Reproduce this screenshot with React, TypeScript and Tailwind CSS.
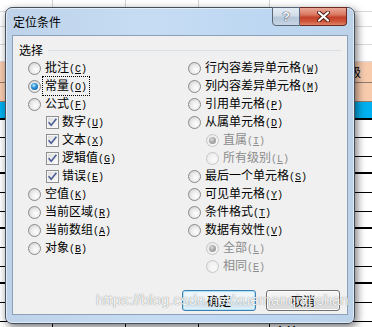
import clsx from 'clsx';

type Opt = {
  label: string;
  hot: string;
  kind: 'radio' | 'check';
  checked?: boolean;
  disabled?: boolean;
  indent?: boolean;
  focus?: boolean;
};

const leftOpts: Opt[] = [
  { label: '批注', hot: 'C', kind: 'radio' },
  { label: '常量', hot: 'O', kind: 'radio', checked: true, focus: true },
  { label: '公式', hot: 'F', kind: 'radio' },
  { label: '数字', hot: 'U', kind: 'check', checked: true, indent: true },
  { label: '文本', hot: 'X', kind: 'check', checked: true, indent: true },
  { label: '逻辑值', hot: 'G', kind: 'check', checked: true, indent: true },
  { label: '错误', hot: 'E', kind: 'check', checked: true, indent: true },
  { label: '空值', hot: 'K', kind: 'radio' },
  { label: '当前区域', hot: 'R', kind: 'radio' },
  { label: '当前数组', hot: 'A', kind: 'radio' },
  { label: '对象', hot: 'B', kind: 'radio' },
];

const rightOpts: Opt[] = [
  { label: '行内容差异单元格', hot: 'W', kind: 'radio' },
  { label: '列内容差异单元格', hot: 'M', kind: 'radio' },
  { label: '引用单元格', hot: 'P', kind: 'radio' },
  { label: '从属单元格', hot: 'D', kind: 'radio' },
  { label: '直属', hot: 'I', kind: 'radio', checked: true, disabled: true, indent: true },
  { label: '所有级别', hot: 'L', kind: 'radio', disabled: true, indent: true },
  { label: '最后一个单元格', hot: 'S', kind: 'radio' },
  { label: '可见单元格', hot: 'Y', kind: 'radio' },
  { label: '条件格式', hot: 'T', kind: 'radio' },
  { label: '数据有效性', hot: 'V', kind: 'radio' },
  { label: '全部', hot: 'L', kind: 'radio', checked: true, disabled: true, indent: true },
  { label: '相同', hot: 'E', kind: 'radio', disabled: true, indent: true },
];

// worksheet rows peeking out around the dialog
const sheetRows = [
  { row: 'h-[12px] border-b border-[#dadada]', line: 'border-[#d4d4d4]' },
  { row: 'h-[15px] border-b border-[#dadada]', line: 'border-[#d4d4d4]' },
  { row: 'h-[18px] border-b border-[#dadada]', line: 'border-[#d4d4d4]' },
  { row: 'h-[17px] border-b border-[#dadada]', line: 'border-[#d4d4d4]' },
  { row: 'h-[21px] border-b border-[#8f7b6c] bg-[#f8cbad]', line: 'border-[#8f7b6c]', text: '级' },
  { row: 'h-[19px] border-b border-[#8f7b6c] bg-[#f8cbad]', line: 'border-[#8f7b6c]' },
  { row: 'h-[18px] border-b-2 border-black bg-[#00b0f0]', line: 'border-black' },
  { row: 'h-[18px] border-b border-black', line: 'border-black' },
  { row: 'h-[19px] border-b border-black', line: 'border-black' },
  { row: 'h-[17px] border-b-2 border-black', line: 'border-black' },
  { row: 'h-[19px] border-b border-black', line: 'border-black' },
  { row: 'h-[19px] border-b border-black', line: 'border-black' },
  { row: 'h-[17px] border-b-2 border-black', line: 'border-black' },
  { row: 'h-[19px] border-b border-black', line: 'border-black' },
  { row: 'h-[19px] border-b border-black', line: 'border-black' },
  { row: 'h-[17px] border-b-2 border-black', line: 'border-black' },
  { row: 'h-[19px] border-b border-black', line: 'border-black' },
  { row: 'h-[19px] border-b border-black', line: 'border-black' },
  { row: 'h-[19px] border-b border-black', line: 'border-black', extra: '审核' },
];

function Sheet() {
  return (
    <div className="flex flex-col">
      {sheetRows.map((r, i) => (
        <div key={i} className={clsx('flex', r.row)}>
          <div className={clsx('w-[53px] border-r', r.line)} />
          <div className={clsx('w-[73px] border-r', r.line)} />
          <div className={clsx('w-[73px] border-r', r.line)} />
          <div className={clsx('w-[71px] border-r', r.line)} />
          <div className="flex flex-1 items-start">
            {r.text && <span className="ml-auto mr-[11px] leading-[20px]">{r.text}</span>}
            {r.extra && <span className="ml-[4px] mt-[2px] leading-[16px] font-bold">{r.extra}</span>}
          </div>
        </div>
      ))}
    </div>
  );
}

function Radio({ checked, disabled }: { checked?: boolean; disabled?: boolean }) {
  return (
    <span
      className={clsx(
        'flex h-[13px] w-[13px] shrink-0 items-center justify-center rounded-full border',
        disabled
          ? 'border-[#c6c6c6] bg-[radial-gradient(circle_at_62%_62%,#fbfbfb_0%,#f0f0f0_55%,#e3e3e3_100%)]'
          : 'border-[#8a8a8a] bg-[radial-gradient(circle_at_62%_62%,#ffffff_0%,#ececec_45%,#c8c8c8_100%)]'
      )}
    >
      {checked && (
        <span
          className={clsx(
            'h-[7px] w-[7px] rounded-full',
            disabled
              ? 'bg-[radial-gradient(circle_at_40%_35%,#dadada_0%,#ababab_45%,#8a8a8a_100%)]'
              : 'bg-[radial-gradient(circle_at_40%_35%,#c4ecff_0%,#2b93dc_40%,#0b4a86_100%)]'
          )}
        />
      )}
    </span>
  );
}

function Check() {
  return (
    <span className="flex h-[13px] w-[13px] shrink-0 items-center justify-center border border-[#8e8f8f] bg-[linear-gradient(135deg,#d9d9d9,#ffffff)] shadow-[inset_0_0_0_1px_#f6f6f6]">
      <svg width="11" height="11" viewBox="0 0 11 11">
        <path d="M1.6 5.2 L4.2 8.2 L9.4 1.8" fill="none" stroke="#4a5e95" strokeWidth="1.6" />
      </svg>
    </span>
  );
}

function Option({ o }: { o: Opt }) {
  return (
    <div className={clsx('flex h-[18px] items-center', o.indent && 'pl-[18px]')}>
      {o.kind === 'radio' ? <Radio checked={o.checked} disabled={o.disabled} /> : <Check />}
      <span
        className={clsx(
          'whitespace-nowrap px-[2px] leading-[15px]',
          o.kind === 'radio' ? 'ml-[2px]' : 'ml-px',
          o.disabled && 'text-[#8c8c8c]',
          o.focus && 'outline outline-1 outline-dotted outline-black'
        )}
      >
        {o.label}
        <span className="font-['Liberation_Mono',monospace] text-[10px]">
          (<span className="underline">{o.hot}</span>)
        </span>
      </span>
    </div>
  );
}

function Dialog() {
  return (
    <div className="absolute left-[5px] top-[7px] flex h-[317px] w-[350px] flex-col rounded-[7px] border border-[#454f5c] bg-[linear-gradient(90deg,#bed3ea_0%,#c6dcf3_40%,#bdd7f2_75%,#bcd2e9_100%)] shadow-[2px_3px_9px_rgba(0,0,0,0.55),inset_0_0_0_1px_rgba(255,255,255,0.55)]">
      <div className="flex h-[27px] items-start justify-between pl-[7px] pr-[7px]">
        <span className="mt-[5px] leading-[18px]">定位条件</span>
        <div className="-mt-px flex">
          <div className="flex h-[19px] w-[28px] items-center justify-center rounded-bl-[4px] border border-[#5a6778] bg-[linear-gradient(180deg,#e4ecf5_0%,#d2dde9_45%,#b7c6d8_55%,#c6d4e4_100%)] font-['Liberation_Sans',sans-serif] text-[13px] font-bold text-[#f5f7fa] [text-shadow:0_0_1px_#2c3646,0_0_1px_#2c3646]">
            ?
          </div>
          <div className="flex h-[19px] w-[47px] items-center justify-center rounded-br-[4px] border border-l-0 border-[#6b2a20] bg-[linear-gradient(180deg,#eaa999_0%,#d9765f_40%,#c4402a_55%,#cf573c_80%,#df8668_100%)]">
            <svg width="13" height="11" viewBox="0 0 13 11">
              <path d="M2 1.5 L11 9.5 M11 1.5 L2 9.5" stroke="#4d1b13" strokeWidth="4" strokeLinecap="round" />
              <path d="M2 1.5 L11 9.5 M11 1.5 L2 9.5" stroke="#ffffff" strokeWidth="2.2" strokeLinecap="round" />
            </svg>
          </div>
        </div>
      </div>
      <div className="mx-[6px] mb-[8px] flex flex-1 flex-col border border-[#8ca1b8] bg-[#f0f0f0]">
        <div className="mt-[5px] flex h-[18px] items-center px-[6px]">
          <span>选择</span>
          <span className="ml-[5px] h-px flex-1 bg-[#d5dfe5]" />
        </div>
        <div className="flex pl-[15px]">
          <div className="w-[160px]">
            {leftOpts.map((o) => (
              <Option key={o.label} o={o} />
            ))}
          </div>
          <div>
            {rightOpts.map((o) => (
              <Option key={o.label} o={o} />
            ))}
          </div>
        </div>
        <div className="mt-[15px] flex justify-end gap-[10px] pr-[7px]">
          <button className="h-[21px] w-[74px] rounded-[3px] border border-[#3c7fb1] bg-[linear-gradient(180deg,#f4f9fc_0%,#eaf3f8_50%,#dbe9f1_51%,#d3e4ee_100%)] shadow-[inset_0_0_0_1px_#b6e3f8,inset_0_0_2px_2px_#e2f4fc] leading-[19px]">
            确定
          </button>
          <button className="h-[21px] w-[74px] rounded-[3px] border border-[#707070] bg-[linear-gradient(180deg,#f6f6f6_0%,#eeeeee_50%,#e2e2e2_51%,#dadada_100%)] shadow-[inset_0_0_0_1px_#fcfcfc] leading-[19px]">
            取消
          </button>
        </div>
      </div>
    </div>
  );
}

export default function App() {
  return (
    <div className="relative h-[327px] w-[372px] overflow-hidden bg-white font-['Noto_Sans_CJK_SC',sans-serif] text-[12px] text-black">
      <Sheet />
      <Dialog />
      {/* blog watermark stamped over the screenshot */}
      <div className="pointer-events-none absolute left-[96px] top-[292px] whitespace-nowrap font-['Liberation_Sans',sans-serif] text-[15px] leading-[15px] text-[rgba(255,255,255,0.92)] [text-shadow:0_0_1px_rgba(70,70,70,0.75)]">
        https://blog.csdn.net/xuemanqianshan
      </div>
    </div>
  );
}
